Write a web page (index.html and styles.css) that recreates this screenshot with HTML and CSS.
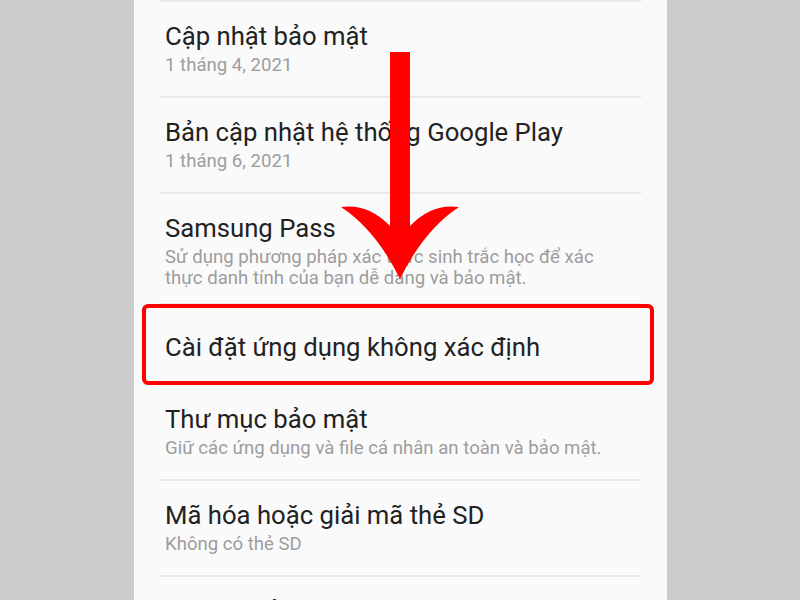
FILE: index.html
```html
<!DOCTYPE html>
<html lang="vi">
<head>
<meta charset="utf-8">
<link rel="stylesheet" href="styles.css">
</head>
<body>
<div class="screen">
  <ul class="list">
    <li class="item">
      <div class="title">Cập nhật bảo mật</div>
      <div class="sub">1 tháng 4, 2021</div>
    </li>
    <li class="item">
      <div class="title">Bản cập nhật hệ thống Google Play</div>
      <div class="sub">1 tháng 6, 2021</div>
    </li>
    <li class="item item--tall">
      <div class="title">Samsung Pass</div>
      <div class="sub">Sử dụng phương pháp xác thực sinh trắc học để xác thực danh tính của bạn dễ dàng và bảo mật.</div>
    </li>
    <li class="item item--single item--marked">
      <div class="title">Cài đặt ứng dụng không xác định</div>
    </li>
    <li class="item">
      <div class="title">Thư mục bảo mật</div>
      <div class="sub">Giữ các ứng dụng và file cá nhân an toàn và bảo mật.</div>
    </li>
    <li class="item">
      <div class="title">Mã hóa hoặc giải mã thẻ SD</div>
      <div class="sub">Không có thẻ SD</div>
    </li>
    <li class="item">
      <div class="title">Cài đặt bảo mật khác</div>
    </li>
  </ul>
</div>
<svg class="arrow" width="800" height="600" viewBox="0 0 800 600" xmlns="http://www.w3.org/2000/svg">
  <rect x="390" y="52" width="20" height="185" fill="#ff0000"/>
  <path d="M341 207 Q368 203 390 226 L410 226 Q432 203 459 207 Q424 230 400 279 Q376 230 341 207 Z" fill="#ff0000"/>
</svg>
</body>
</html>
```

FILE: styles.css
```css
html, body {
  margin: 0;
  padding: 0;
}
body {
  width: 800px;
  height: 600px;
  overflow: hidden;
  background: #cbcbcb;
  font-family: Roboto, "Noto Sans", "DejaVu Sans", sans-serif;
  position: relative;
}
.screen {
  width: 533px;
  height: 600px;
  margin: 0 0 0 134px;
  background: #fafafa;
  overflow: hidden;
}
.list {
  list-style: none;
  margin: 0 26px;
  padding: 0;
}
.item {
  border-top: 2px solid #e8e8e8;
  padding: 19px 5px 20px;
  position: relative;
}
.item--tall {
  padding-bottom: 14px;
}
.item--single {
  padding-top: 27px;
  padding-bottom: 21px;
}
.item--marked::after {
  content: "";
  position: absolute;
  left: -18px;
  right: -13px;
  top: -1px;
  bottom: -2px;
  border: 4px solid #ff0000;
  border-radius: 6px;
  z-index: 2;
}
.title {
  font-size: 25.7px;
  line-height: 30px;
  color: #222222;
  white-space: nowrap;
}
.sub {
  margin-top: 4px;
  font-size: 18.6px;
  line-height: 21px;
  color: #9d9d9d;
  padding-right: 30px;
}
.arrow {
  position: absolute;
  left: 0;
  top: 0;
  pointer-events: none;
  z-index: 5;
}
```
